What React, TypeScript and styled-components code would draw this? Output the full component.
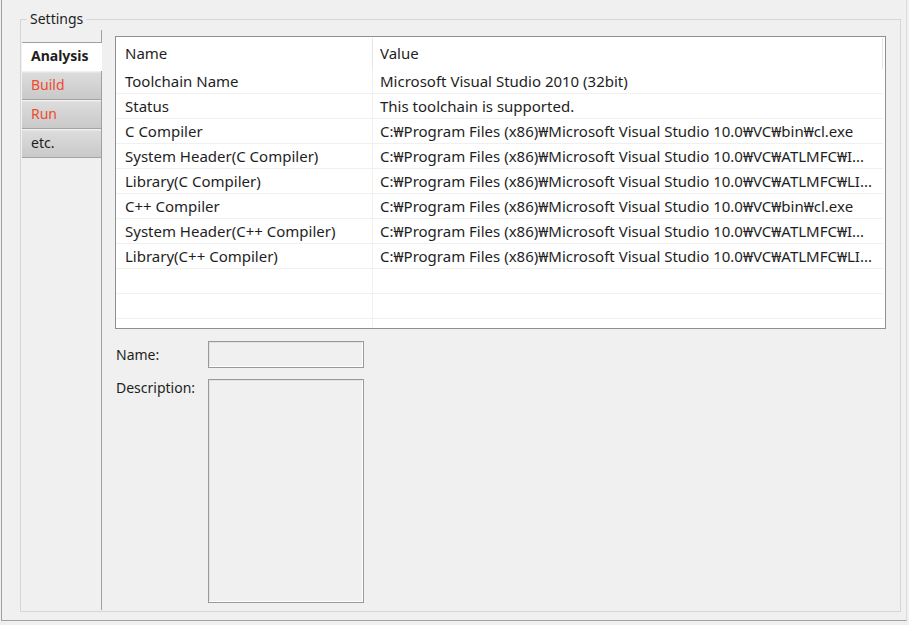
import React from 'react';
import styled, { createGlobalStyle } from 'styled-components';

const Global = createGlobalStyle`
  html, body { margin: 0; padding: 0; background: #f0f0f0; }
  body {
    font-family: "Noto Sans", "Noto Sans CJK KR", sans-serif;
    font-size: 14px;
    color: #1e1e1e;
    width: 909px;
    height: 625px;
    overflow: hidden;
  }
  * { box-sizing: border-box; }
`;

const Frame = styled.div`
  margin-left: 1px;
  width: 906px;
  height: 621px;
  border-left: 1px solid #a0a0a0;
  border-bottom: 1px solid #a0a0a0;
  border-right: 1px solid #dcdcdc;
  padding: 10px 0 0 18px;
`;

const Group = styled.fieldset`
  margin: 0;
  padding: 0 0 1px 1px;
  border: 1px solid #d6d6d6;
  width: 881px;
  height: 602px;
  min-width: 0;
  display: flex;
  flex-direction: column;
`;

const Legend = styled.legend`
  margin-left: 5px;
  padding: 0 3px;
  font-size: 14px;
  line-height: 18px;
  color: #1e1e1e;
`;

const Body = styled.div`
  flex: 1;
  min-height: 0;
  display: flex;
  padding-top: 2px;
`;

const TabColumn = styled.div`
  width: 80px;
  display: flex;
  flex-direction: column;
`;

const TabTop = styled.div`
  height: 12px;
  border-right: 1px solid #a0a0a0;
`;

const TabList = styled.div`
  border-top: 1px solid #a0a0a0;
  display: flex;
  flex-direction: column;
  gap: 1px;
  border-right: 1px solid #a0a0a0;
`;

const Tab = styled.div<{ $active?: boolean; $red?: boolean }>`
  height: 28px;
  display: flex;
  align-items: center;
  padding: 0 0 4px 9px;
  margin-right: ${p => (p.$active ? '-1px' : '0')};
  font-weight: ${p => (p.$active ? 700 : 400)};
  color: ${p => (p.$red ? '#ee4a2e' : '#1e1e1e')};
  background: ${p =>
    p.$active ? '#ffffff' : 'linear-gradient(#dcdcdc, #c9c9c9)'};
  border-top: 1px solid ${p => (p.$active ? '#ffffff' : '#e4e4e4')};
  border-bottom: 1px solid ${p => (p.$active ? '#ffffff' : '#a4a4a4')};
`;

const TabFill = styled.div`
  flex: 1;
  border-right: 1px solid #a0a0a0;
`;

const Content = styled.div`
  flex: 1;
  display: flex;
  flex-direction: column;
  padding: 6px 14px 0 13px;
`;

const Table = styled.div`
  height: 293px;
  border: 1px solid #8f8f8f;
  background: #ffffff;
  overflow: hidden;
  display: flex;
  flex-direction: column;
  font-size: 15px;
`;

const HeaderRow = styled.div`
  display: flex;
  height: 32px;
  flex-shrink: 0;
`;

const HeaderCell = styled.div<{ $w: number; $pad: number }>`
  width: ${p => p.$w}px;
  padding: 0 0 2px ${p => p.$pad}px;
  display: flex;
  align-items: center;
  border-right: 1px solid #e5e5e5;
  margin-top: 1px;
`;

const Row = styled.div`
  display: flex;
  height: 25px;
  width: 767px;
  flex-shrink: 0;
  border-bottom: 1px solid #f0f0f0;
`;

const Cell = styled.div<{ $w: number; $pad: number; $sep?: boolean }>`
  width: ${p => p.$w}px;
  padding-left: ${p => p.$pad}px;
  display: flex;
  align-items: center;
  white-space: nowrap;
  overflow: hidden;
  border-right: ${p => (p.$sep ? '1px solid #f0f0f0' : 'none')};
`;

const Form = styled.div`
  margin-top: 12px;
  display: grid;
  grid-template-columns: 93px 156px;
  row-gap: 11px;
`;

const Label = styled.div<{ $top?: boolean }>`
  padding-left: 1px;
  line-height: 20px;
  align-self: ${p => (p.$top ? 'start' : 'center')};
  margin-top: ${p => (p.$top ? '-1px' : '0')};
`;

const Field = styled.div<{ $h: number }>`
  height: ${p => p.$h}px;
  border: 1px solid #999999;
  background: #f0f0f0;
  box-shadow: inset -1px -1px 0 #ffffff, inset 1px 1px 0 #e2e2e2;
`;

const rows: [string, string][] = [
  ['Toolchain Name', 'Microsoft Visual Studio 2010 (32bit)'],
  ['Status', 'This toolchain is supported.'],
  ['C Compiler', 'C:₩Program Files (x86)₩Microsoft Visual Studio 10.0₩VC₩bin₩cl.exe'],
  ['System Header(C Compiler)', 'C:₩Program Files (x86)₩Microsoft Visual Studio 10.0₩VC₩ATLMFC₩I...'],
  ['Library(C Compiler)', 'C:₩Program Files (x86)₩Microsoft Visual Studio 10.0₩VC₩ATLMFC₩LI...'],
  ['C++ Compiler', 'C:₩Program Files (x86)₩Microsoft Visual Studio 10.0₩VC₩bin₩cl.exe'],
  ['System Header(C++ Compiler)', 'C:₩Program Files (x86)₩Microsoft Visual Studio 10.0₩VC₩ATLMFC₩I...'],
  ['Library(C++ Compiler)', 'C:₩Program Files (x86)₩Microsoft Visual Studio 10.0₩VC₩ATLMFC₩LI...'],
  ['', ''],
  ['', ''],
  ['', ''],
];

export default function App() {
  return (
    <>
      <Global />
      <Frame>
        <Group>
          <Legend>Settings</Legend>
          <Body>
            <TabColumn>
              <TabTop />
              <TabList>
                <Tab $active>Analysis</Tab>
                <Tab $red>Build</Tab>
                <Tab $red>Run</Tab>
                <Tab>etc.</Tab>
              </TabList>
              <TabFill />
            </TabColumn>
            <Content>
              <Table>
                <HeaderRow>
                  <HeaderCell $w={257} $pad={9}>Name</HeaderCell>
                  <HeaderCell $w={510} $pad={7}>Value</HeaderCell>
                </HeaderRow>
                {rows.map((r, i) => (
                  <Row key={i}>
                    <Cell $w={257} $pad={9} $sep>{r[0]}</Cell>
                    <Cell $w={510} $pad={7}>{r[1]}</Cell>
                  </Row>
                ))}
              </Table>
              <Form>
                <Label>Name:</Label>
                <Field $h={27} />
                <Label $top>Description:</Label>
                <Field $h={224} />
              </Form>
            </Content>
          </Body>
        </Group>
      </Frame>
    </>
  );
}
